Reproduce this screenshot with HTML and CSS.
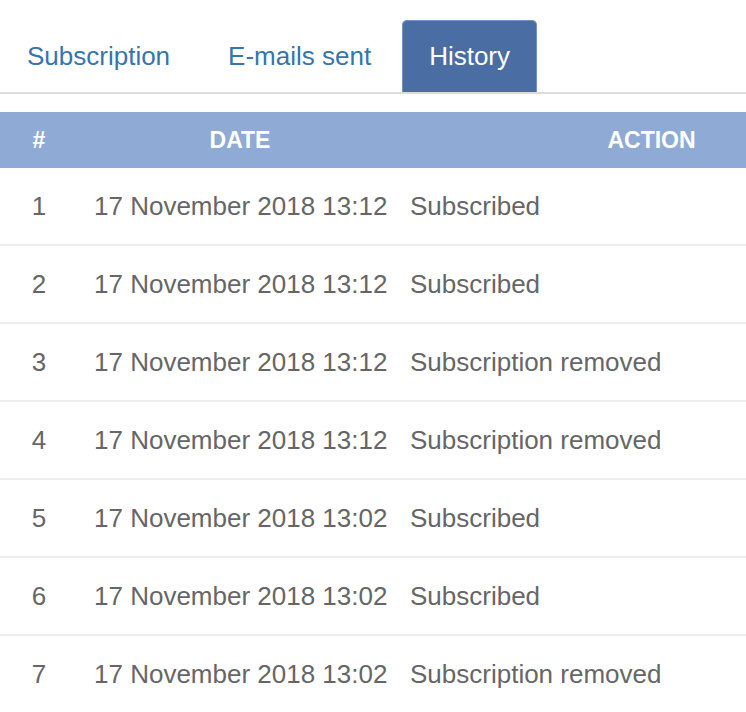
FILE: index.html
```html
<!DOCTYPE html>
<html>
<head>
<meta charset="utf-8">
<link rel="stylesheet" href="styles.css">
</head>
<body>
<div class="page">
  <nav class="tabs">
    <a class="tab">Subscription</a>
    <a class="tab">E-mails sent</a>
    <a class="tab active">History</a>
  </nav>
  <div class="table-wrap">
    <table class="history">
      <colgroup>
        <col class="c-num">
        <col class="c-date">
        <col class="c-action">
      </colgroup>
      <thead>
        <tr><th class="num">#</th><th class="date">DATE</th><th class="action">ACTION</th></tr>
      </thead>
      <tbody>
        <tr><td class="num">1</td><td class="date">17 November 2018 13:12</td><td class="action">Subscribed</td></tr>
        <tr><td class="num">2</td><td class="date">17 November 2018 13:12</td><td class="action">Subscribed</td></tr>
        <tr><td class="num">3</td><td class="date">17 November 2018 13:12</td><td class="action">Subscription removed</td></tr>
        <tr><td class="num">4</td><td class="date">17 November 2018 13:12</td><td class="action">Subscription removed</td></tr>
        <tr><td class="num">5</td><td class="date">17 November 2018 13:02</td><td class="action">Subscribed</td></tr>
        <tr><td class="num">6</td><td class="date">17 November 2018 13:02</td><td class="action">Subscribed</td></tr>
        <tr><td class="num">7</td><td class="date">17 November 2018 13:02</td><td class="action">Subscription removed</td></tr>
      </tbody>
    </table>
  </div>
</div>
</body>
</html>
```

FILE: styles.css
```css
html, body {
  margin: 0;
  padding: 0;
  background: #fff;
  overflow: hidden;
}
body {
  font-family: "Liberation Sans", Arial, sans-serif;
  font-size: 26px;
  color: #666;
}
.page {
  width: 746px;
  overflow: hidden;
}
.tabs {
  display: flex;
  gap: 4px;
  padding-top: 20px;
  border-bottom: 2px solid #dcdcdc;
}
.tab {
  display: flex;
  align-items: center;
  height: 72px;
  padding: 0 26px;
  box-sizing: border-box;
  color: #3775ad;
  border: 1px solid transparent;
  border-bottom: 0;
  border-radius: 5px 5px 0 0;
}
.tab.active {
  background: #4a6ea3;
  border-color: #7593c2;
  color: #fff;
}
.table-wrap {
  margin-top: 18px;
  width: 746px;
  overflow: hidden;
}
.history {
  border-collapse: collapse;
  table-layout: fixed;
  width: 905px;
}
.c-num { width: 78px; }
.c-date { width: 320px; }
.c-action { width: 507px; }
.history th {
  background: #8fabd5;
  color: #fff;
  font-weight: bold;
  font-size: 23px;
  height: 56px;
  padding: 0;
  text-align: center;
}
.history td {
  height: 76px;
  padding: 0;
  border-bottom: 2px solid #eeeeee;
  white-space: nowrap;
  vertical-align: middle;
}
.history .num { text-align: center; }
.history .date { padding-left: 16px; padding-right: 12px; }
.history .action { padding-left: 12px; padding-right: 12px; }
.history td.date, .history td.action { text-align: left; }
```
